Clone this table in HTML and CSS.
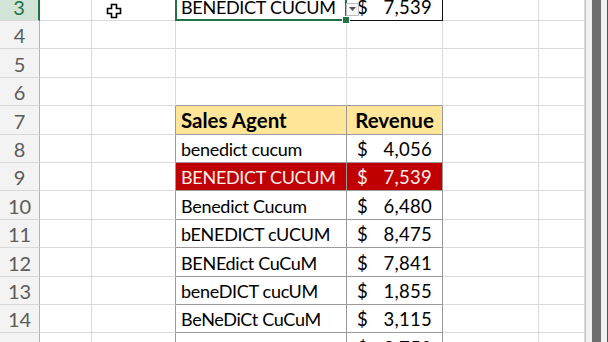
FILE: index.html
```html
<!DOCTYPE html>
<html>
<head>
<meta charset="utf-8">
<link rel="stylesheet" href="styles.css">
</head>
<body>
<div class="screen">
  <div class="sheet">
    <div class="grid">
      <div class="rh sel">3</div><div class="c"></div><div class="c"></div><div class="c tl active">BENEDICT CUCUM<span class="handle"></span></div><div class="c acc lk"><span class="dd"><svg width="7" height="4" viewBox="0 0 7 4"><path d="M0 0h7L3.5 4z" fill="#555"/></svg></span><span>$</span><span>7,539</span></div><div class="c"></div><div class="c"></div>
      <div class="rh">4</div><div class="c"></div><div class="c"></div><div class="c"></div><div class="c"></div><div class="c"></div><div class="c"></div>
      <div class="rh">5</div><div class="c"></div><div class="c"></div><div class="c"></div><div class="c"></div><div class="c"></div><div class="c"></div>
      <div class="rh">6</div><div class="c"></div><div class="c"></div><div class="c tb"></div><div class="c tb"></div><div class="c"></div><div class="c"></div>
      <div class="rh">7</div><div class="c"></div><div class="c tr"></div><div class="c t hd">Sales Agent</div><div class="c t hd">Revenue</div><div class="c"></div><div class="c"></div>
      <div class="rh">8</div><div class="c"></div><div class="c tr"></div><div class="c t">benedict cucum</div><div class="c t acc"><span>$</span><span>4,056</span></div><div class="c"></div><div class="c"></div>
      <div class="rh">9</div><div class="c"></div><div class="c tr"></div><div class="c t hi">BENEDICT CUCUM</div><div class="c t acc hi"><span>$</span><span>7,539</span></div><div class="c"></div><div class="c"></div>
      <div class="rh">10</div><div class="c"></div><div class="c tr"></div><div class="c t">Benedict Cucum</div><div class="c t acc"><span>$</span><span>6,480</span></div><div class="c"></div><div class="c"></div>
      <div class="rh">11</div><div class="c"></div><div class="c tr"></div><div class="c t">bENEDICT cUCUM</div><div class="c t acc"><span>$</span><span>8,475</span></div><div class="c"></div><div class="c"></div>
      <div class="rh">12</div><div class="c"></div><div class="c tr"></div><div class="c t">BENEdict CuCuM</div><div class="c t acc"><span>$</span><span>7,841</span></div><div class="c"></div><div class="c"></div>
      <div class="rh">13</div><div class="c"></div><div class="c tr"></div><div class="c t">beneDICT cucUM</div><div class="c t acc"><span>$</span><span>1,855</span></div><div class="c"></div><div class="c"></div>
      <div class="rh">14</div><div class="c"></div><div class="c tr"></div><div class="c t">BeNeDiCt CuCuM</div><div class="c t acc"><span>$</span><span>3,115</span></div><div class="c"></div><div class="c"></div>
      <div class="rh">15</div><div class="c"></div><div class="c tr"></div><div class="c t">beNEdiCT cuCUm</div><div class="c t acc"><span>$</span><span>2,750</span></div><div class="c"></div><div class="c"></div>
    </div>
    <svg class="cursor" width="16" height="16" viewBox="0 0 16 16"><path d="M5.5 1.5h5v4h4v5h-4v4h-5v-4h-4v-5h4z" fill="#fff" stroke="#000" stroke-width="1.6"/></svg>
  </div>
  <div class="scroll">
    <div class="edge"></div>
    <div class="pad"></div>
    <div class="thumb"></div>
    <div class="pad2"></div>
    <div class="green"></div>
  </div>
</div>
</body>
</html>
```
FILE: styles.css
```css
html, body {
  margin: 0;
  padding: 0;
  background: #fff;
  overflow: hidden;
}
.screen {
  display: flex;
  width: 608px;
  height: 342px;
  overflow: hidden;
}
.sheet {
  position: relative;
  width: 585px;
  overflow: hidden;
}
.grid {
  display: grid;
  grid-template-columns: 40px 52px 84px 171px 96px 96px 46px;
  grid-auto-rows: 28.4px;
  margin-top: -7.4px;
  font-family: Lato, "Open Sans", sans-serif;
  font-size: 18px;
  letter-spacing: -0.3px;
  color: #000;
}
.rh {
  box-sizing: border-box;
  background: #f3f3f3;
  border-right: 1px solid #b4b4b4;
  border-bottom: 1px solid #d8d8d8;
  color: #5c5c5c;
  font-size: 20px;
  letter-spacing: 0;
  display: flex;
  align-items: flex-end;
  justify-content: center;
  padding-bottom: 1px;
}
.rh.sel {
  background: #d2e4d8;
  color: #217346;
  border-right: 2px solid #217346;
}
.c {
  box-sizing: border-box;
  border-right: 1px solid #dadada;
  border-bottom: 1px solid #dadada;
  display: flex;
  align-items: flex-end;
  padding: 0 4px 2px 5px;
  white-space: nowrap;
  position: relative;
}
.c.tb { border-bottom-color: #9a9a9a; }
.c.tr { border-right-color: #9a9a9a; }
.c.t {
  border-right-color: #9a9a9a;
  border-bottom-color: #9a9a9a;
}
.c.hd {
  background: #ffe699;
  font-weight: bold;
  font-size: 20.5px;
  letter-spacing: 0;
}
.c.hd + .c.hd {
  justify-content: center;
  padding: 0 2px 2px 2px;
}
.c.hi {
  background: #c00000;
  color: #fdeeee;
}
.c.acc {
  justify-content: space-between;
  padding: 0 10px 2px 10px;
  font-size: 18.5px;
  letter-spacing: 0.3px;
}
.c.lk {
  border-right-color: #111;
  border-bottom-color: #111;
}
.c.active {
  border-bottom-color: #111;
}
.c.active::after {
  content: "";
  position: absolute;
  left: -1px;
  top: -2px;
  right: -1px;
  bottom: -1px;
  border: 2px solid #217346;
}
.handle {
  position: absolute;
  right: -4px;
  bottom: -4px;
  width: 6px;
  height: 6px;
  background: #217346;
  border: 1px solid #fff;
  z-index: 2;
}
.dd {
  position: absolute;
  left: -1px;
  top: 10px;
  width: 13px;
  height: 13px;
  box-sizing: border-box;
  border: 1px solid #bdbdbd;
  background: #f7f7f7;
  display: flex;
  align-items: center;
  justify-content: center;
  z-index: 3;
}
.cursor {
  position: absolute;
  left: 106px;
  top: 3px;
}
.scroll {
  display: flex;
  flex: 1;
}
.edge { width: 1px; background: #c4c4c4; }
.pad { width: 6px; background: #f1f1f1; }
.thumb { width: 9px; background: #6e6e6e; }
.pad2 { width: 6px; background: #f1f1f1; }
.green { width: 1px; background: #2f6b48; }
```
